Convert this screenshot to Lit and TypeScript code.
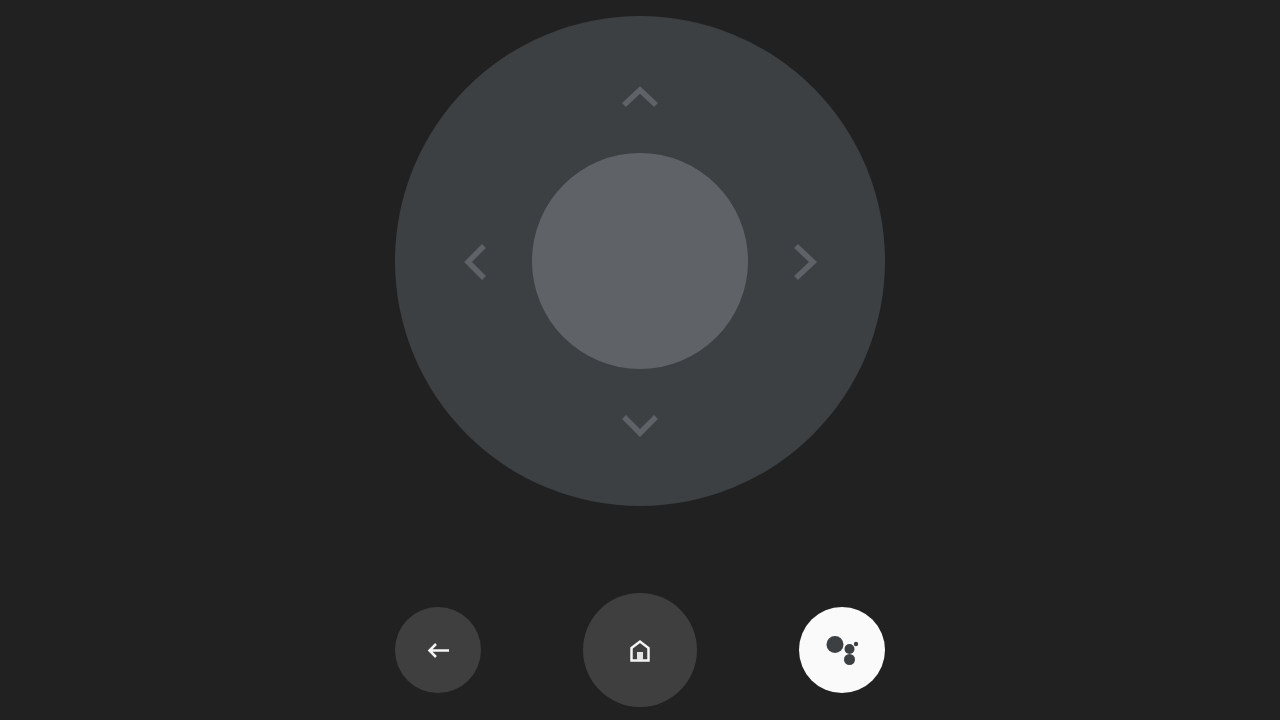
import { LitElement, html, css } from 'lit';
import { customElement } from 'lit/decorators.js';

@customElement('app-root')
export class AppRoot extends LitElement {
  static styles = css`
    :host {
      display: flex;
      flex-direction: column;
      align-items: center;
      height: 720px;
      box-sizing: border-box;
      padding-top: 16px;
      background: #212121;
      overflow: hidden;
    }
    button {
      display: flex;
      align-items: center;
      justify-content: center;
      padding: 0;
      border: none;
      border-radius: 50%;
      cursor: pointer;
    }
    svg {
      display: block;
      fill: none;
    }
    .dpad {
      position: relative;
      width: 490px;
      height: 490px;
      border-radius: 50%;
      background: #3c4043;
      display: flex;
      align-items: center;
      justify-content: center;
    }
    .ok {
      width: 216px;
      height: 216px;
      background: #5f6368;
    }
    .arrow {
      position: absolute;
      stroke: #5f6368;
      stroke-width: 5.5;
    }
    .up { left: 225px; top: 66px; }
    .down { left: 225px; top: 396px; }
    .left { left: 67px; top: 226px; }
    .right { left: 397px; top: 226px; }
    .controls {
      width: 490px;
      margin-top: 87px;
      display: flex;
      align-items: center;
      justify-content: space-between;
    }
    .small {
      width: 86px;
      height: 86px;
      background: #3f3f3f;
    }
    .home {
      width: 114px;
      height: 114px;
      background: #3f3f3f;
    }
    .assistant {
      background: #fafafa;
    }
    .glyph {
      stroke: #f5f5f5;
      stroke-width: 2.5;
    }
    .home-door {
      fill: #e4e4e4;
      stroke: none;
    }
    .dots {
      fill: #3c4043;
    }
  `;

  render() {
    return html`
      <div class="dpad">
        <svg class="arrow up" width="40" height="28" viewBox="0 0 40 28"><path d="M4 23 20 8 36 23" /></svg>
        <svg class="arrow down" width="40" height="28" viewBox="0 0 40 28"><path d="M4 5 20 21 36 5" /></svg>
        <svg class="arrow left" width="28" height="40" viewBox="0 0 28 40"><path d="M22 4 6 20 22 36" /></svg>
        <svg class="arrow right" width="28" height="40" viewBox="0 0 28 40"><path d="M4 4 21 20 4 36" /></svg>
        <button class="ok" aria-label="Select"></button>
      </div>
      <div class="controls">
        <button class="small" aria-label="Back">
          <svg class="glyph" width="24" height="24" viewBox="0 0 24 24"><path d="M23 12.500H3M10 6 3.500 12.500 10 19" /></svg>
        </button>
        <button class="home" aria-label="Home">
          <svg width="24" height="24" viewBox="0 0 24 24">
            <path class="glyph" d="M3.500 10 12 3.500l8.500 6.500V22.500H3.500Z" />
            <rect class="home-door" x="9" y="14" width="6" height="8" />
          </svg>
        </button>
        <button class="small assistant" aria-label="Assistant">
          <svg class="dots" width="40" height="40" viewBox="0 0 40 40">
            <circle cx="13" cy="14.500" r="8.500" />
            <circle cx="27.500" cy="19" r="5" />
            <circle cx="27.500" cy="29.500" r="5.500" />
            <circle cx="34" cy="14" r="2.200" />
          </svg>
        </button>
      </div>
    `;
  }
}
